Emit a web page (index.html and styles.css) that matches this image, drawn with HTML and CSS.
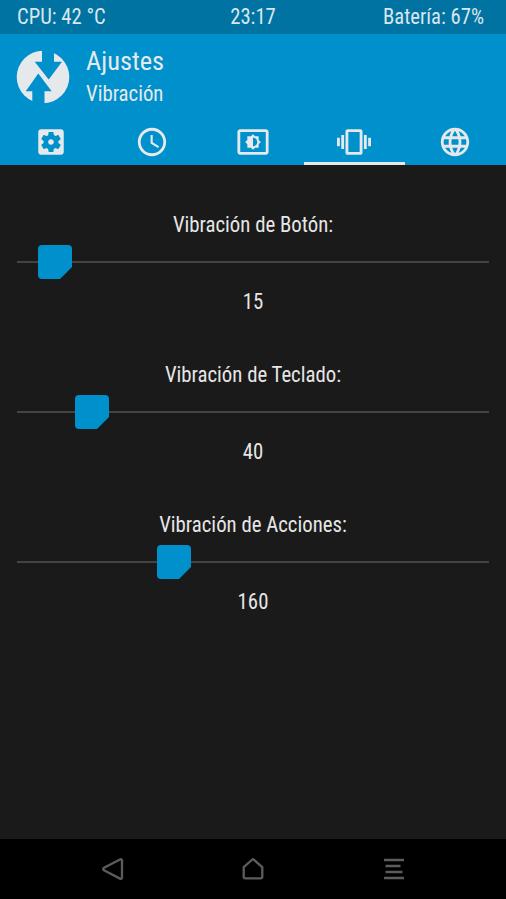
FILE: index.html
```html
<!DOCTYPE html>
<html lang="es">
<head>
<meta charset="utf-8">
<title>Ajustes</title>
<link rel="stylesheet" href="styles.css">
</head>
<body>
<div class="status"><span class="left">CPU: 42 °C</span><span>23:17</span><span class="right">Batería: 67%</span></div>
<header class="header">
  <div class="brand">
    <svg class="logo" viewBox="0 0 54 54"><circle cx="27" cy="27" r="26.3" fill="#e6e9ec"/><path fill="#0090cb" d="M26 0H38V11.7H46L32.7 29.5L18.7 11.7H26ZM22.3 23.5L35.7 41.2H28.5V54H16.3V41.2H9.7Z"/></svg>
    <div class="titles"><h1>Ajustes</h1><p>Vibración</p></div>
  </div>
  <nav class="tabs">
    <a><svg viewBox="0 0 24 24"><path d="M12 10c-1.1 0-2 .9-2 2s.9 2 2 2 2-.9 2-2-.9-2-2-2zm7-7H5c-1.11 0-2 .9-2 2v14c0 1.1.89 2 2 2h14c1.11 0 2-.9 2-2V5c0-1.1-.89-2-2-2zm-1.75 9c0 .23-.02.46-.05.68l1.48 1.16c.13.11.17.3.08.45l-1.4 2.42c-.09.15-.27.21-.43.15l-1.74-.7c-.36.28-.76.51-1.18.69l-.26 1.85c-.03.17-.18.3-.35.3h-2.8c-.17 0-.32-.13-.35-.29l-.26-1.85c-.43-.18-.82-.41-1.18-.69l-1.74.7c-.16.06-.34 0-.43-.15l-1.4-2.42c-.09-.15-.05-.34.08-.45l1.48-1.16c-.03-.23-.05-.46-.05-.69 0-.23.02-.46.05-.68l-1.48-1.16c-.13-.11-.17-.3-.08-.45l1.4-2.42c.09-.15.27-.21.43-.15l1.74.7c.36-.28.76-.51 1.18-.69l.26-1.85c.03-.17.18-.3.35-.3h2.8c.17 0 .32.13.35.29l.26 1.85c.43.18.82.41 1.18.69l1.74-.7c.16-.06.34 0 .43.15l1.4 2.42c.09.15.05.34-.08.45l-1.48 1.16c.03.23.05.46.05.69z"/></svg></a>
    <a><svg viewBox="0 0 24 24"><path d="M11.99 2C6.47 2 2 6.48 2 12s4.47 10 9.99 10C17.52 22 22 17.52 22 12S17.52 2 11.99 2zM12 20c-4.42 0-8-3.58-8-8s3.58-8 8-8 8 3.58 8 8-3.58 8-8 8zm.5-13H11v6l5.25 3.15.75-1.23-4.5-2.67z"/></svg></a>
    <a><svg viewBox="0 0 24 24"><path d="M21 3H3c-1.1 0-2 .9-2 2v14c0 1.1.9 2 2 2h18c1.1 0 2-.9 2-2V5c0-1.1-.9-2-2-2zm0 16.01H3V4.99h18v14.02zM8 16h2.5l1.5 1.5 1.5-1.5H16v-2.5l1.5-1.5-1.5-1.5V8h-2.5L12 6.5 10.5 8H8v2.5L6.5 12 8 13.5V16zm4-7c1.66 0 3 1.34 3 3s-1.34 3-3 3V9z"/></svg></a>
    <a class="active"><svg viewBox="0 0 24 24"><path d="M0 15h2V9H0v6zm3 2h2V7H3v10zm19-8v6h2V9h-2zm-3 8h2V7h-2v10zM16.5 3h-9C6.67 3 6 3.67 6 4.5v15c0 .83.67 1.5 1.5 1.5h9c.83 0 1.5-.67 1.5-1.5v-15c0-.83-.67-1.5-1.5-1.5zM16 19H8V5h8v14z"/></svg></a>
    <a><svg viewBox="0 0 24 24"><path d="M11.99 2C6.47 2 2 6.48 2 12s4.47 10 9.99 10C17.52 22 22 17.52 22 12S17.52 2 11.99 2zm6.93 6h-2.95c-.32-1.25-.78-2.45-1.38-3.56 1.84.63 3.37 1.91 4.33 3.56zM12 4.04c.83 1.2 1.48 2.53 1.91 3.96h-3.82c.43-1.43 1.08-2.76 1.91-3.96zM4.26 14C4.1 13.36 4 12.69 4 12s.1-1.36.26-2h3.38c-.08.66-.14 1.32-.14 2 0 .68.06 1.34.14 2H4.26zm.82 2h2.95c.32 1.25.78 2.45 1.38 3.56-1.84-.63-3.37-1.9-4.33-3.56zm2.95-8H5.08c.96-1.66 2.49-2.93 4.33-3.56C8.81 5.55 8.35 6.75 8.03 8zM12 19.96c-.83-1.2-1.48-2.53-1.91-3.96h3.82c-.43 1.43-1.08 2.76-1.91 3.96zM14.34 14H9.66c-.09-.66-.16-1.32-.16-2 0-.68.07-1.35.16-2h4.68c.09.65.16 1.32.16 2 0 .68-.07 1.34-.16 2zm.25 5.56c.6-1.11 1.06-2.31 1.38-3.56h2.95c-.96 1.65-2.49 2.93-4.33 3.56zM16.36 14c.08-.66.14-1.32.14-2 0-.68-.06-1.34-.14-2h3.38c.16.64.26 1.31.26 2s-.1 1.36-.26 2h-3.38z"/></svg></a>
  </nav>
</header>
<main class="content">
  <section class="setting"><label>Vibración de Botón:</label><div class="slider" style="--pos:21px"><svg class="thumb" viewBox="0 0 34 34"><path d="M4 0H30Q34 0 34 4V22L22 34H4Q0 34 0 30V4Q0 0 4 0Z"/></svg></div><output>15</output></section>
  <section class="setting"><label>Vibración de Teclado:</label><div class="slider" style="--pos:58px"><svg class="thumb" viewBox="0 0 34 34"><path d="M4 0H30Q34 0 34 4V22L22 34H4Q0 34 0 30V4Q0 0 4 0Z"/></svg></div><output>40</output></section>
  <section class="setting"><label>Vibración de Acciones:</label><div class="slider" style="--pos:140px"><svg class="thumb" viewBox="0 0 34 34"><path d="M4 0H30Q34 0 34 4V22L22 34H4Q0 34 0 30V4Q0 0 4 0Z"/></svg></div><output>160</output></section>
</main>
<footer class="navbar">
  <svg viewBox="0 0 24 24"><path d="M21 3.4V20.6Q20.6 22.4 19 21.6L3 13.2Q1.2 12 3 10.8L19 2.4Q20.6 1.6 21 3.4Z"/></svg>
  <svg viewBox="0 0 24 24"><path d="M12 2L21.3 10.2V20Q21.3 21.3 20 21.3H4Q2.7 21.3 2.7 20V10.2Z"/></svg>
  <svg viewBox="0 0 24 24"><path d="M2 3H22M3.5 9H18.5M3.5 15H20.5M2 21H22"/></svg>
</footer>
</body>
</html>
```
FILE: styles.css
```css
* { box-sizing: border-box; margin: 0; padding: 0; }
body {
  width: 506px; height: 899px; overflow: hidden;
  display: flex; flex-direction: column;
  background: #1a1a1a; color: #e6e6e6;
  font: 22px/26px "Roboto Condensed", Roboto, sans-serif;
}
.status {
  height: 34px; padding: 4px 22px 0 17px; flex: none;
  display: grid; grid-template-columns: 150px 1fr 145px; text-align: center;
  background: #0073a3; color: #dbe6ec; font-size: 21.5px;
}
.status span { transform: scaleX(.96); }
.status .left { text-align: left; transform-origin: left; }
.status .right { text-align: right; transform-origin: right; }
.header { height: 131px; flex: none; background: #0090cb; color: #e6e9ec; display: flex; flex-direction: column; }
.brand { height: 86px; padding: 16px 0 0 16px; display: flex; gap: 16px; }
.logo { width: 54px; height: 54px; }
.titles h1 { font-size: 26.4px; font-weight: 400; line-height: 30px; margin-top: -4px; }
.titles p { line-height: 26px; margin-top: 5px; transform: scaleX(.945); transform-origin: left; }
.tabs { flex: 1; display: grid; grid-template-columns: repeat(5, 1fr); }
.tabs a { display: flex; justify-content: center; padding-top: 5px; }
.tabs svg { width: 34px; height: 34px; fill: #e6e9ec; }
.tabs .active { border-bottom: 3px solid #e6e9ec; }
.content { flex: 1; padding: 47px 17px 0; }
.setting { height: 149.8px; text-align: center; }
.setting label, .setting output { display: block; transform: scaleX(.945); }
.slider { height: 34px; margin: 7px 0 10px; display: flex; align-items: center; padding-left: var(--pos); background: linear-gradient(#444, #444) center / 100% 2px no-repeat; }
.thumb { width: 34px; height: 34px; fill: #0090cb; }
.navbar { height: 60px; flex: none; background: #000; display: flex; justify-content: center; gap: 116.5px; align-items: center; }
.navbar svg { width: 24px; height: 24px; fill: none; stroke: #5c5c5c; stroke-width: 2.3; stroke-linejoin: round; }
```
